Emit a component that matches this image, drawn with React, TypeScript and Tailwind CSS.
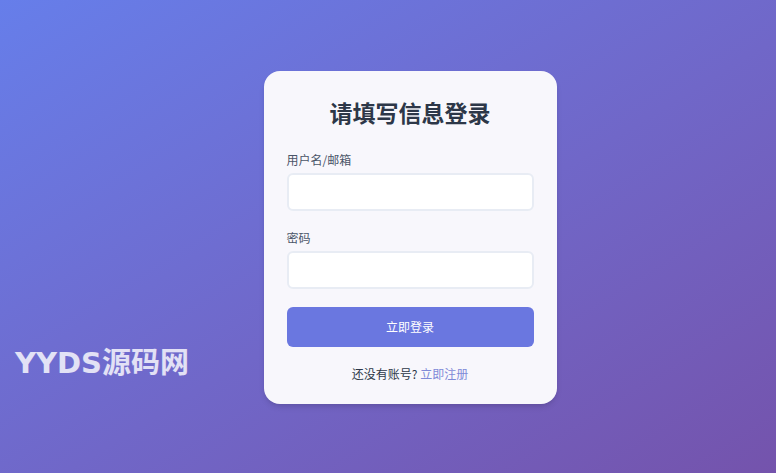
export default function App() {
  return (
    <div
      className="relative flex h-[473px] w-full items-start justify-center overflow-hidden bg-gradient-to-br from-[#667eea] to-[#7453ac] pl-[44px] pt-[71px]"
      style={{ fontFamily: '"Noto Sans CJK SC", "Noto Sans", sans-serif' }}
    >
      {/* Login card */}
      <div className="w-[293px] rounded-2xl bg-[#f8f7fc] px-[23px] pb-[21px] pt-[25px] shadow-md">
        <h1 className="text-center text-[23px] font-bold leading-[32px] text-[#2d3748]">
          请填写信息登录
        </h1>

        <div className="mt-[23px]">
          <label className="block text-[12px] leading-[18px] text-[#4a5568]">用户名/邮箱</label>
          <input
            type="text"
            className="mt-1 block h-[38px] w-full rounded-md border-2 border-[#e8ecf4] bg-white px-3 text-sm outline-none"
          />
        </div>

        <div className="mt-[18px]">
          <label className="block text-[12px] leading-[18px] text-[#4a5568]">密码</label>
          <input
            type="password"
            className="mt-1 block h-[38px] w-full rounded-md border-2 border-[#e8ecf4] bg-white px-3 text-sm outline-none"
          />
        </div>

        <button className="mt-[18px] h-[40px] w-full rounded-md bg-[#6a77e0] text-[12px] text-white">
          立即登录
        </button>

        <p className="mt-[18px] text-center text-[12px] leading-[18px] text-[#2d3748]">
          还没有账号? <span className="text-[#7f8ad8]">立即注册</span>
        </p>
      </div>

      {/* Watermark */}
      <div
        className="pointer-events-none absolute left-[15px] top-[343px] text-[29px] font-bold leading-[40px] text-white/80"
        style={{ fontFamily: '"DejaVu Sans", "Noto Sans CJK SC", sans-serif' }}
      >
        YYDS源码网
      </div>
    </div>
  );
}
